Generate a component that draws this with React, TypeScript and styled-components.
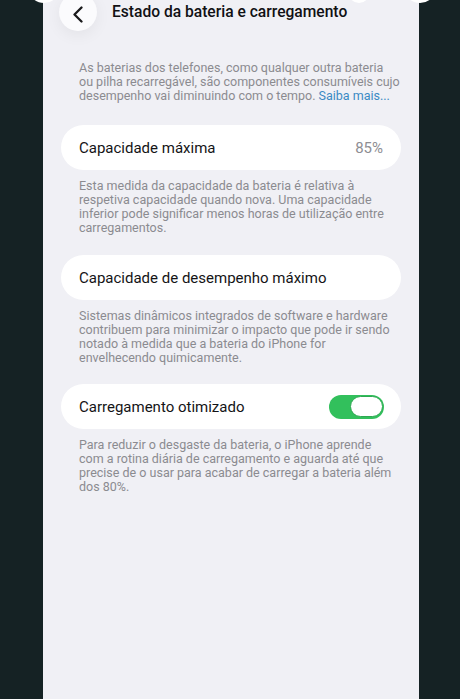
import React from "react";
import styled, { createGlobalStyle } from "styled-components";

const GlobalStyle = createGlobalStyle`
  html, body { margin: 0; padding: 0; background: #152224; }
  body { font-family: Roboto, "Liberation Sans", sans-serif; -webkit-font-smoothing: antialiased; }
  * { box-sizing: border-box; }
`;

const Page = styled.div`
  position: relative;
  width: 460px;
  height: 699px;
  overflow: hidden;
  background: #152224;
  display: flex;
  justify-content: center;
`;

const Screen = styled.div`
  width: 376px;
  margin-left: 2px;
  height: 699px;
  background: #f0f0f5;
  display: flex;
  flex-direction: column;
  padding: 0 18px;
`;

const Header = styled.div`
  display: flex;
  align-items: center;
  height: 38px;
  margin-top: -7px;
  margin-left: -2px;
  gap: 15px;
`;

const BackButton = styled.div`
  width: 38px;
  height: 38px;
  border-radius: 50%;
  background: #fbfbfd;
  box-shadow: 0 4px 16px rgba(0, 0, 0, 0.06);
  display: flex;
  align-items: center;
  justify-content: center;
  padding-top: 5px;
  flex-shrink: 0;
`;

const Title = styled.div`
  font-size: 15.6px;
  font-weight: 500;
  color: #111114;
  padding-top: 0;
`;

const Note = styled.p<{ $top: number }>`
  margin: ${(p) => p.$top}px 0 0;
  padding: 0 18px;
  font-size: 12.5px;
  line-height: 14px;
  color: #8b8b90;
  white-space: nowrap;
`;

const Link = styled.span`
  color: #3a8ac4;
`;

const Card = styled.div<{ $top: number }>`
  margin-top: ${(p) => p.$top}px;
  height: 45px;
  border-radius: 23px;
  background: #ffffff;
  display: flex;
  align-items: center;
  justify-content: space-between;
  padding: 0 18px;
`;

const Label = styled.span`
  font-size: 15px;
  color: #141416;
`;

const Value = styled.span`
  font-size: 15px;
  color: #8e8e93;
`;

const Toggle = styled.div`
  width: 55px;
  height: 24px;
  border-radius: 12px;
  background: #32c05c;
  display: flex;
  align-items: center;
  justify-content: flex-end;
  padding: 2px 1px;
  margin-right: -1px;
`;

const Knob = styled.div`
  width: 33px;
  height: 21px;
  border-radius: 11px;
  background: #ffffff;
  border: 1px solid #2ea852;
`;

const TopBlob = styled.div<{ $left: number; $w: number }>`
  position: absolute;
  top: -20px;
  left: ${(p) => p.$left}px;
  width: ${(p) => p.$w}px;
  height: 23px;
  border-radius: 50%;
  background: #ffffff;
`;

export default function App() {
  return (
    <>
      <GlobalStyle />
      <Page>
        <Screen>
          <Header>
            <BackButton>
              <svg width="12" height="17" viewBox="0 0 12 17" fill="none">
                <path d="M9.5 1.5 L2.5 8.5 L9.5 15.5" stroke="#1a1a1c" strokeWidth="2.3" strokeLinecap="round" strokeLinejoin="round" />
              </svg>
            </BackButton>
            <Title>Estado da bateria e carregamento</Title>
          </Header>
          <Note $top={30}>
            As baterias dos telefones, como qualquer outra bateria
            <br />
            ou pilha recarregável, são componentes consumíveis cujo
            <br />
            desempenho vai diminuindo com o tempo. <Link>Saiba mais...</Link>
          </Note>
          <Card $top={22}>
            <Label>Capacidade máxima</Label>
            <Value>85%</Value>
          </Card>
          <Note $top={9}>
            Esta medida da capacidade da bateria é relativa à
            <br />
            respetiva capacidade quando nova. Uma capacidade
            <br />
            inferior pode significar menos horas de utilização entre
            <br />
            carregamentos.
          </Note>
          <Card $top={20}>
            <Label>Capacidade de desempenho máximo</Label>
          </Card>
          <Note $top={9}>
            Sistemas dinâmicos integrados de software e hardware
            <br />
            contribuem para minimizar o impacto que pode ir sendo
            <br />
            notado à medida que a bateria do iPhone for
            <br />
            envelhecendo quimicamente.
          </Note>
          <Card $top={19}>
            <Label>Carregamento otimizado</Label>
            <Toggle>
              <Knob />
            </Toggle>
          </Card>
          <Note $top={9}>
            Para reduzir o desgaste da bateria, o iPhone aprende
            <br />
            com a rotina diária de carregamento e aguarda até que
            <br />
            precise de o usar para acabar de carregar a bateria além
            <br />
            dos 80%.
          </Note>
        </Screen>
        <TopBlob $left={30} $w={28} />
        <TopBlob $left={348} $w={22} />
        <TopBlob $left={406} $w={28} />
      </Page>
    </>
  );
}
